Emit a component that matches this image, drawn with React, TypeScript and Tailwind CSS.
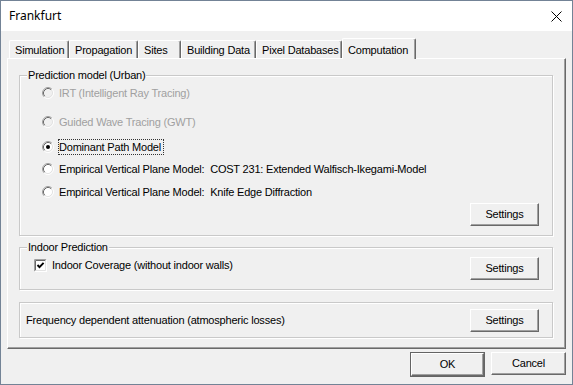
import React from "react";

function Radio({ checked = false, disabled = false }: { checked?: boolean; disabled?: boolean }) {
  return (
    <svg width="12" height="12" viewBox="0 0 12 12" className="shrink-0">
      <circle cx="6" cy="6" r="4.5" fill={disabled ? "#f0f0f0" : "#ffffff"} />
      <path d="M2.11 9.89 A5.5 5.5 0 0 1 9.89 2.11" fill="none" stroke="#a0a0a0" strokeWidth="1" />
      <path d="M9.89 2.11 A5.5 5.5 0 0 1 2.11 9.89" fill="none" stroke="#ffffff" strokeWidth="1" />
      <path d="M2.82 9.18 A4.5 4.5 0 0 1 9.18 2.82" fill="none" stroke="#696969" strokeWidth="1" />
      <path d="M9.18 2.82 A4.5 4.5 0 0 1 2.82 9.18" fill="none" stroke="#e3e3e3" strokeWidth="1" />
      {checked && <circle cx="6" cy="6" r="2" fill="#000000" />}
    </svg>
  );
}

function Checkbox() {
  return (
    <svg width="13" height="13" viewBox="0 0 13 13" className="shrink-0">
      <rect x="0" y="0" width="13" height="13" fill="#ffffff" />
      <path d="M0.5 12.5 V0.5 H12.5" fill="none" stroke="#a0a0a0" />
      <path d="M1.5 11.5 V1.5 H11.5" fill="none" stroke="#696969" />
      <path d="M0.5 12.5 H12.5 V0.5" fill="none" stroke="#ffffff" />
      <path d="M1.5 11.5 H11.5 V1.5" fill="none" stroke="#e3e3e3" />
      <path d="M3.5 6 L5.5 8.2 L9.6 3.8" fill="none" stroke="#000000" strokeWidth="1.9" />
    </svg>
  );
}

function Button({ label, className = "" }: { label: string; className?: string }) {
  return (
    <div
      className={
        "h-[23px] flex items-center justify-center bg-[#f0f0f0] border border-t-white border-l-white border-r-[#696969] border-b-[#696969] shadow-[inset_-1px_-1px_0_#a0a0a0] text-[11px] text-black " +
        className
      }
    >
      {label}
    </div>
  );
}

function RadioRow({
  label,
  checked = false,
  disabled = false,
  focused = false,
  className = "",
}: {
  label: string;
  checked?: boolean;
  disabled?: boolean;
  focused?: boolean;
  className?: string;
}) {
  return (
    <div className={"flex items-center h-[16px] gap-[4px] " + className}>
      <Radio checked={checked} disabled={disabled} />
      <span
        className={
          "leading-[14px] whitespace-pre border pr-[2px] " +
          (focused ? "border-dotted border-[#333333] " : "border-transparent ") +
          (disabled ? "text-[#a0a0a0]" : "text-black")
        }
      >
        {label}
      </span>
    </div>
  );
}

const tabs: { label: string; w: string }[] = [
  { label: "Simulation", w: "w-[60px]" },
  { label: "Propagation", w: "w-[69px]" },
  { label: "Sites", w: "w-[43px]" },
  { label: "Building Data", w: "w-[75px]" },
  { label: "Pixel Databases", w: "w-[86px]" },
];

export default function App() {
  return (
    <div
      className="w-[573px] h-[385px] border border-[#738396] bg-[#f0f0f0] flex flex-col text-[11px] tracking-[-0.2px] text-black overflow-hidden"
      style={{ fontFamily: '"Liberation Sans", Arial, sans-serif' }}
    >
      {/* Title bar */}
      <div className="h-[30px] bg-white flex items-center justify-between pl-[8px] pr-[10px] shrink-0">
        <span
          className="text-[12px] tracking-normal text-black"
          style={{ fontFamily: '"Noto Sans", "Liberation Sans", sans-serif' }}
        >
          Frankfurt
        </span>
        <svg width="11" height="11" viewBox="0 0 11 11">
          <path d="M0.5 0.5 L10.5 10.5 M10.5 0.5 L0.5 10.5" stroke="#000000" strokeWidth="1" />
        </svg>
      </div>

      {/* Body */}
      <div className="flex flex-col px-[6px] pt-[7px]">
        {/* Tab strip */}
        <div className="flex items-end h-[21px] pl-[2px] -mb-px relative z-10">
          {tabs.map((t) => (
            <div
              key={t.label}
              className={
                t.w +
                " h-[18px] mb-px flex items-center pt-[1px] pl-[5px] whitespace-nowrap rounded-t-[2px] border-t border-l border-r border-t-white border-l-white border-r-[#696969] shadow-[inset_-1px_0_0_#a0a0a0] bg-[#f0f0f0]"
              }
            >
              {t.label}
            </div>
          ))}
          <div className="w-[74px] h-[21px] flex items-start pt-[3px] pl-[5px] whitespace-nowrap rounded-t-[2px] border-t border-l border-r border-t-white border-l-white border-r-[#696969] shadow-[inset_-1px_0_0_#a0a0a0] bg-[#f0f0f0]">
            Computation
          </div>
        </div>

        {/* Tab panel */}
        <div className="h-[291px] border border-t-white border-l-white border-r-[#696969] border-b-[#696969] shadow-[inset_-1px_-1px_0_#a0a0a0] pt-[16px] pl-[11px] pr-[12px] flex flex-col">
          {/* Prediction model group */}
          <div className="relative h-[161px] border border-[#c9c9c9] shadow-[1px_1px_0_#ffffff,inset_1px_1px_0_#ffffff] flex flex-col pl-[22px] pt-[9px]">
            <span className="absolute left-[7px] top-[-8px] px-[1px] bg-[#f0f0f0] leading-[14px]">
              Prediction model (Urban)
            </span>
            <RadioRow label="IRT (Intelligent Ray Tracing)" disabled />
            <RadioRow label="Guided Wave Tracing (GWT)" disabled className="mt-[13px]" />
            <RadioRow label="Dominant Path Model" checked focused className="mt-[9px]" />
            <RadioRow
              label="Empirical Vertical Plane Model:  COST 231: Extended Walfisch-Ikegami-Model"
              className="mt-[6px]"
            />
            <RadioRow label="Empirical Vertical Plane Model:  Knife Edge Diffraction" className="mt-[7px]" />
            <div className="flex justify-end mt-[3px] pr-[13px]">
              <Button label="Settings" className="w-[69px]" />
            </div>
          </div>

          {/* Indoor Prediction group */}
          <div className="relative mt-[11px] h-[43px] border border-[#c9c9c9] shadow-[1px_1px_0_#ffffff,inset_1px_1px_0_#ffffff] flex items-start justify-between pl-[14px] pr-[13px] pt-[9px]">
            <span className="absolute left-[7px] top-[-8px] px-[1px] bg-[#f0f0f0] leading-[14px]">
              Indoor Prediction
            </span>
            <div className="flex items-center gap-[5px] mt-[2px] h-[13px]">
              <Checkbox />
              <span>Indoor Coverage (without indoor walls)</span>
            </div>
            <Button label="Settings" className="w-[69px]" />
          </div>

          {/* Frequency group */}
          <div className="mt-[12px] h-[36px] border border-[#c9c9c9] shadow-[1px_1px_0_#ffffff,inset_1px_1px_0_#ffffff] flex items-center justify-between pl-[6px] pr-[13px]">
            <span>Frequency dependent attenuation (atmospheric losses)</span>
            <Button label="Settings" className="w-[69px]" />
          </div>
        </div>

        {/* Dialog buttons */}
        <div className="flex justify-end gap-[6px] mt-[3px]">
          <div className="border border-[#646464]">
            <Button label="OK" className="w-[73px] h-[21px]" />
          </div>
          <Button label="Cancel" className="w-[75px]" />
        </div>
      </div>
    </div>
  );
}
